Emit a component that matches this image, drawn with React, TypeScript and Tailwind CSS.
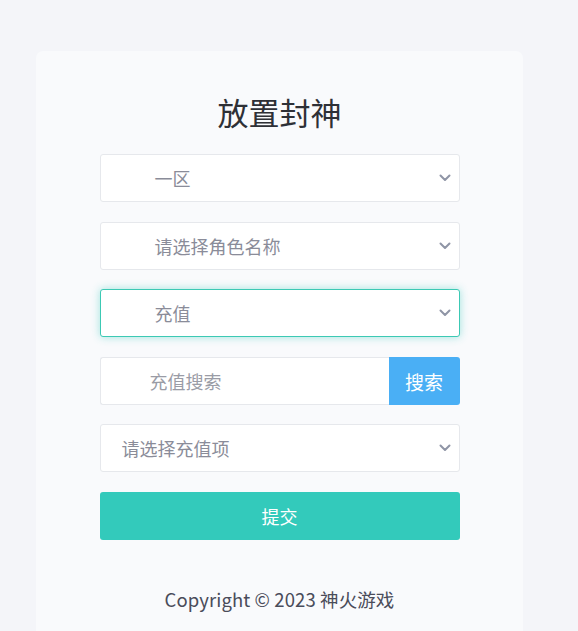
import React from "react";

const Chevron = () => (
  <svg width="12" height="8" viewBox="0 0 12 8" className="shrink-0">
    <path d="M1.5 1.5 L6 6 L10.5 1.5" fill="none" stroke="#8f95a6" strokeWidth="2" strokeLinecap="round" strokeLinejoin="round" />
  </svg>
);

function SelectBox({ text, pl, focused }: { text: string; pl: string; focused?: boolean }) {
  return (
    <div
      className={
        "h-[48px] w-full bg-white rounded-[3px] flex items-center justify-between pr-[8px] " +
        pl +
        (focused
          ? " border border-[#3cc9b4] shadow-[0_0_8px_rgba(51,202,187,0.45)]"
          : " border border-[#e6e8ec]")
      }
    >
      <span className="text-[18px] text-[#8a8c99] leading-none">{text}</span>
      <Chevron />
    </div>
  );
}

export default function App() {
  return (
    <div
      className="min-h-[631px] w-full bg-[#f4f5f9] pt-[51px] px-[36px] overflow-hidden"
      style={{ fontFamily: '"Noto Sans CJK SC", "Noto Sans", sans-serif' }}
    >
      <div className="w-[487px] h-[600px] bg-[#f9fafc] rounded-[7px] flex flex-col items-center pt-[38px]">
        <h1 className="text-[31px] leading-[46px] text-[#2e3036] font-normal">放置封神</h1>
        <div className="w-[360px] flex flex-col mt-[19px]">
          <SelectBox text="一区" pl="pl-[54px]" />
          <div className="h-[20px]" />
          <SelectBox text="请选择角色名称" pl="pl-[54px]" />
          <div className="h-[19px]" />
          <SelectBox text="充值" pl="pl-[54px]" focused />
          <div className="h-[20px]" />
          <div className="h-[48px] w-full flex">
            <div className="flex-1 bg-white border border-[#e6e8ec] border-r-0 rounded-l-[3px] flex items-center pl-[49px]">
              <span className="text-[18px] text-[#9a9ca6] leading-none">充值搜索</span>
            </div>
            <div className="w-[71px] bg-[#4aaff5] rounded-r-[3px] flex items-center justify-center">
              <span className="text-[19px] text-white leading-none">搜索</span>
            </div>
          </div>
          <div className="h-[19px]" />
          <SelectBox text="请选择充值项" pl="pl-[21px]" />
          <div className="h-[20px]" />
          <div className="h-[48px] w-full bg-[#33cabb] rounded-[3px] flex items-center justify-center">
            <span className="text-[18px] text-white leading-none">提交</span>
          </div>
        </div>
        <div className="mt-[50px] text-[18.5px] text-[#4a4c5a] leading-none tracking-[0.1px]">Copyright © 2023 神火游戏</div>
      </div>
    </div>
  );
}
